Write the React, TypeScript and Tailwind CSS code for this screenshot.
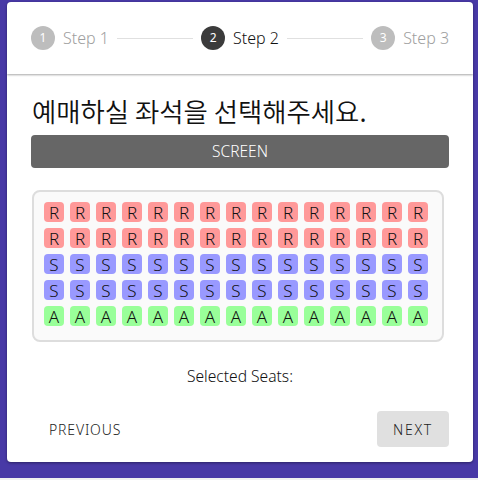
import React from "react";

const rows: { label: string; cls: string }[] = [
  { label: "R", cls: "bg-[#ff9999]" },
  { label: "R", cls: "bg-[#ff9999]" },
  { label: "S", cls: "bg-[#9999ff]" },
  { label: "S", cls: "bg-[#9999ff]" },
  { label: "A", cls: "bg-[#99ff99]" },
];

const font = { fontFamily: '"Noto Sans", "Noto Sans CJK KR", sans-serif' };

function Step({ n, label, active }: { n: number; label: string; active?: boolean }) {
  return (
    <div className="flex items-center gap-2 shrink-0">
      <div
        className={`w-6 h-6 rounded-full flex items-center justify-center text-[12px] text-white ${
          active ? "bg-[#3b3b3b]" : "bg-[#bdbdbd]"
        }`}
      >
        {n}
      </div>
      <span className={`text-[16px] font-light ${active ? "text-[#111]" : "text-[#9e9e9e]"}`}>{label}</span>
    </div>
  );
}

export default function App() {
  return (
    <div style={font} className="w-[478px] h-[480px] bg-[#f0f0f0]">
      <div className="h-[478px] bg-[#4839a6] pt-[2px] pl-[7px] pr-[5px]">
        <div className="bg-white rounded-[4px] h-[460px] shadow-[0_1px_3px_rgba(0,0,0,0.4)] overflow-hidden">
          <div className="h-[72px] px-6 flex items-center shadow-[0_1px_2px_rgba(0,0,0,0.35)] relative">
            <Step n={1} label="Step 1" />
            <div className="flex-1 h-px bg-[#e0e0e0] mx-2" />
            <Step n={2} label="Step 2" active />
            <div className="flex-1 h-px bg-[#e0e0e0] mx-2" />
            <Step n={3} label="Step 3" />
          </div>
          <div className="px-6">
            <div
              className="mt-[21px] text-[26.4px] leading-[32px] text-[#111] pl-[1px]"
              style={{ fontFamily: '"Noto Sans CJK KR", "Noto Sans", sans-serif', fontWeight: 350 }}
            >
              예매하실 좌석을 선택해주세요.
            </div>
            <div className="mt-[8px] h-[33px] rounded-[4px] bg-[#666666] text-white text-[15.5px] font-light flex items-center justify-center">
              SCREEN
            </div>
            <div className="mt-[22px] ml-[1px] w-[412px] h-[152px] border-2 border-[#dddddd] bg-[#fafafa] rounded-[8px] p-[10px] flex flex-col gap-[6px]">
              {rows.map((r, i) => (
                <div key={i} className="flex gap-[6px]">
                  {Array.from({ length: 15 }).map((_, j) => (
                    <div
                      key={j}
                      className={`w-5 h-5 rounded-[4px] ${r.cls} flex items-center justify-center text-[17px] font-light leading-none text-[#111]`}
                    >
                      {r.label}
                    </div>
                  ))}
                </div>
              ))}
            </div>
            <div className="mt-[23px] text-center text-[15.6px] font-light text-[#111] leading-[22px]">Selected Seats:</div>
            <div className="mt-[24px] flex items-center justify-between">
              <button className="h-9 px-[18px] text-[14px] font-light tracking-[0.06em] text-[#222]">PREVIOUS</button>
              <button className="h-9 w-[72px] rounded-[4px] bg-[#e0e0e0] text-[14px] font-light tracking-[0.12em] text-[#222]">
                NEXT
              </button>
            </div>
          </div>
        </div>
      </div>
    </div>
  );
}
